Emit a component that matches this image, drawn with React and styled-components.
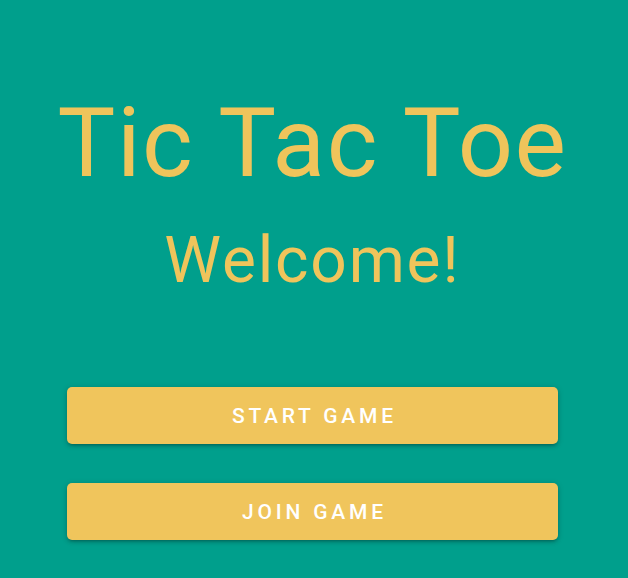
import React from "react";
import styled, { createGlobalStyle } from "styled-components";

const Global = createGlobalStyle`
  html, body { margin: 0; padding: 0; }
  body {
    background: #009f8c;
    font-family: Roboto, "Noto Sans", sans-serif;
  }
`;

const Page = styled.main`
  width: 628px;
  height: 578px;
  background: #009f8c;
  display: flex;
  flex-direction: column;
  align-items: center;
  box-sizing: border-box;
  padding: 95px 3px 0 0;
  overflow: hidden;
`;

const Title = styled.h1`
  margin: 0;
  font-size: 97px;
  line-height: 97px;
  font-weight: 400;
  letter-spacing: 1.6px;
  color: #efc45b;
  text-align: center;
`;

const Subtitle = styled.h2`
  margin: 37px 0 0;
  font-size: 64px;
  line-height: 64px;
  font-weight: 400;
  letter-spacing: 1.8px;
  color: #efc45b;
  text-align: center;
`;

const Actions = styled.div`
  margin-top: 94px;
  width: 491px;
  display: flex;
  flex-direction: column;
  gap: 39px;
`;

const Button = styled.button`
  height: 57px;
  width: 100%;
  border: none;
  border-radius: 5px;
  background: #f0c55c;
  color: #ffffff;
  font-family: Roboto, "Noto Sans", sans-serif;
  font-size: 21px;
  font-weight: 500;
  letter-spacing: 3.8px;
  text-indent: 3.8px;
  text-transform: uppercase;
  box-shadow: 0 3px 3px -2px rgba(0,0,0,0.2), 0 2px 4px 0 rgba(0,0,0,0.14), 0 1px 7px 0 rgba(0,0,0,0.12);
  cursor: pointer;
`;

export default function App() {
  return (
    <>
      <Global />
      <Page>
        <Title>Tic Tac Toe</Title>
        <Subtitle>Welcome!</Subtitle>
        <Actions>
          <Button>Start Game</Button>
          <Button>Join Game</Button>
        </Actions>
      </Page>
    </>
  );
}
